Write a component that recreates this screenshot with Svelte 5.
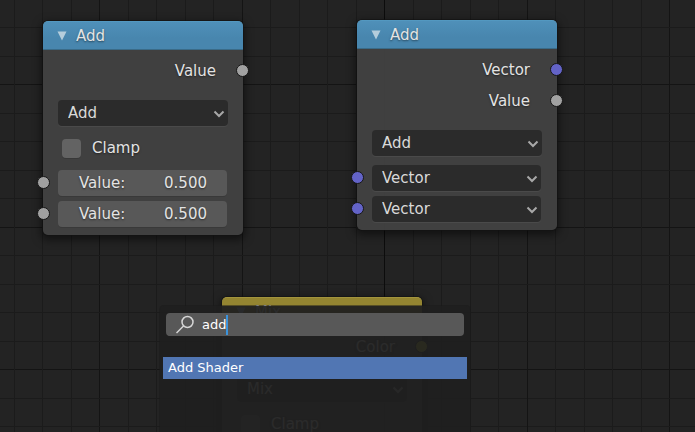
<script>
  const GRID = 285;
  // two major cells per pattern tile, five minor steps in each
  const steps = Array.from({ length: 10 }, (_, i) => ({
    at: Math.round((i * GRID) / 10),
    major: i % 5 === 0,
  }));

  let nodes = $state([
    {
      id: "math",
      title: "Add",
      kind: "vector",
      x: 43,
      y: 21,
      outputs: [{ name: "Value", type: "float" }],
      mode: "Add",
      clamp: false,
      inputs: [
        { name: "Value", type: "float", value: "0.500" },
        { name: "Value", type: "float", value: "0.500" },
      ],
    },
    {
      id: "vecmath",
      title: "Add",
      kind: "vector",
      x: 357,
      y: 20,
      outputs: [
        { name: "Vector", type: "vec" },
        { name: "Value", type: "float" },
      ],
      mode: "Add",
      inputs: [
        { name: "Vector", type: "vec" },
        { name: "Vector", type: "vec" },
      ],
    },
    {
      id: "mix",
      title: "Mix",
      kind: "color",
      x: 222,
      y: 297,
      outputs: [{ name: "Color", type: "color" }],
      mode: "Mix",
      clamp: false,
      inputs: [],
    },
  ]);

  let query = $state("add");
  const entries = ["Add Shader", "Mix Shader", "Emission"];
  let results = $derived(
    entries.filter((e) => e.toLowerCase().includes(query.toLowerCase()))
  );
</script>

{#snippet dropdown(label, value)}
  <span class="dropdown">
    <select aria-label={label}>
      <option>{value}</option>
    </select>
    <svg class="chevron" viewBox="0 0 12 8" aria-hidden="true">
      <path d="M1.5 1.5 L6 6 L10.5 1.5" />
    </svg>
  </span>
{/snippet}

<main>
  <svg class="grid" aria-hidden="true">
    <defs>
      <pattern id="cells" x="99" y="84" width={GRID} height={GRID} patternUnits="userSpaceOnUse">
        {#each steps as s}
          <rect class:major={s.major} x={s.at} y="0" width="1" height={GRID} />
          <rect class:major={s.major} x="0" y={s.at} width={GRID} height="1" />
        {/each}
      </pattern>
    </defs>
    <rect class="fill" width="100%" height="100%" />
    <rect class="axis" x="384" width="1" height="100%" />
  </svg>

  {#each nodes as node (node.id)}
    <section class="node" style="left: {node.x}px; top: {node.y}px">
      <header class={node.kind}>
        <button aria-label="Collapse {node.title}">
          <svg viewBox="0 0 10 10"><path d="M0.5 0.5 H9.5 L5 9.5 Z" /></svg>
        </button>
        <h2>{node.title}</h2>
      </header>

      <ul class="outputs">
        {#each node.outputs as out}
          <li>{out.name}<i class="socket right {out.type}"></i></li>
        {/each}
      </ul>

      <div class="props">
        {@render dropdown("Operation", node.mode)}
        {#if node.clamp !== undefined}
          <label class="clamp">
            <input type="checkbox" bind:checked={node.clamp} />
            Clamp
          </label>
        {/if}
      </div>

      <ul class="inputs">
        {#each node.inputs as input, i}
          <li>
            <i class="socket left {input.type}"></i>
            {#if input.type === "float"}
              <div class="number">
                <label for="{node.id}-{i}">{input.name}:</label>
                <input id="{node.id}-{i}" bind:value={input.value} />
              </div>
            {:else}
              {@render dropdown(input.name, input.name)}
            {/if}
          </li>
        {/each}
      </ul>
    </section>
  {/each}

  <div class="search">
    <label class="field">
      <svg viewBox="0 0 20 20" aria-hidden="true">
        <circle cx="12.5" cy="7" r="5.5" />
        <path d="M8.5 11 L1.5 18" />
      </svg>
      <span class="typed">
        <input aria-label="Search nodes" bind:value={query} />
        <span class="ghost" aria-hidden="true">{query}</span>
      </span>
    </label>
    <ul class="results">
      {#each results as r, i}
        <li><button class:active={i === 0}>{r}</button></li>
      {/each}
    </ul>
  </div>
</main>

<style>
  :global(body) {
    margin: 0;
    background: #232323;
  }

  main {
    position: relative;
    height: 100vh;
    overflow: hidden;
    background: #232323;
    color: #e3e3e3;
    font: 15px/20px "DejaVu Sans", sans-serif;
  }

  ul {
    list-style: none;
    margin: 0;
    padding: 0;
  }

  input,
  select,
  button {
    font: inherit;
    color: inherit;
    border: 0;
    margin: 0;
    padding: 0;
    outline: 0;
    background: none;
    appearance: none;
  }

  .grid {
    display: block;
    width: 100%;
    height: 100%;
  }

  .grid rect {
    fill: #1b1b1b;
  }

  .grid .major {
    fill: #141414;
  }

  .grid .fill {
    fill: url(#cells);
  }

  .grid .axis {
    fill: #0c0c0c;
  }

  .node {
    position: absolute;
    box-sizing: border-box;
    width: 200px;
    padding-bottom: 8px;
    border-radius: 5px;
    background: rgba(66, 66, 66, 0.95);
    box-shadow:
      0 0 0 1px rgba(18, 18, 18, 0.6),
      0 3px 9px 2px rgba(0, 0, 0, 0.5);
    text-shadow: 0 1px 2px rgba(0, 0, 0, 0.5);
  }

  header {
    display: flex;
    align-items: center;
    gap: 9px;
    box-sizing: border-box;
    height: 29px;
    padding-left: 14px;
    border-radius: 5px 5px 0 0;
    border-bottom: 1px solid #3a6b88;
  }

  header.vector {
    background: linear-gradient(#4f90b9, #4886ae 60%);
    border-top: 1px solid #5398c0;
  }

  header.color {
    background: #948531;
    border-top: 1px solid #a3943c;
    border-bottom-color: #6b6126;
  }

  header button {
    display: flex;
  }

  header button svg {
    width: 10px;
    height: 10px;
    fill: #b4cddc;
  }

  h2 {
    margin: 0;
    font: inherit;
  }

  .outputs {
    padding: 11px 0 19px;
    display: grid;
    gap: 11px;
  }

  .outputs li {
    position: relative;
    padding-right: 27px;
    text-align: right;
  }

  .socket {
    position: absolute;
    width: 11px;
    height: 11px;
    border: 1px solid #161616;
    border-radius: 50%;
    background: #a1a1a1;
  }

  .socket.right {
    right: -6px;
    top: 3px;
  }

  .socket.left {
    left: -6px;
    top: 6px;
  }

  .socket.vec {
    background: #6363c7;
  }

  .socket.color {
    background: #c7c729;
  }

  .props {
    padding: 0 15px;
  }

  .dropdown {
    display: block;
    position: relative;
  }

  select {
    display: block;
    width: 100%;
    height: 26px;
    padding-left: 10px;
    border-radius: 4px;
    background: #2b2b2b;
    box-shadow: 0 1px 0 #4a4a4a;
    color: #d9d9d9;
  }

  .chevron {
    position: absolute;
    top: 10px;
    right: 3px;
    width: 12px;
    height: 8px;
    fill: none;
    stroke: #a8a8a8;
    stroke-width: 2;
    pointer-events: none;
  }

  .clamp {
    display: flex;
    align-items: center;
    gap: 11px;
    padding: 12px 0 3px 4px;
  }

  .clamp input {
    width: 19px;
    height: 19px;
    border-radius: 4px;
    background: #636363;
    box-shadow: 0 1px 0 #383838;
  }

  .inputs {
    display: grid;
    gap: 5px;
    padding-top: 9px;
  }

  .inputs li {
    position: relative;
    padding: 0 16px 0 15px;
  }

  .number {
    display: flex;
    align-items: center;
    justify-content: space-between;
    height: 26px;
    padding: 0 20px 0 21px;
    border-radius: 4px;
    background: #585858;
    box-shadow: 0 1px 0 #393939;
  }

  .number input {
    width: 60px;
    text-align: right;
    text-shadow: inherit;
  }

  .search {
    position: absolute;
    left: 160px;
    top: 306px;
    bottom: -6px;
    box-sizing: border-box;
    width: 310px;
    padding: 7px 3px;
    border-radius: 4px;
    background: rgba(31, 31, 31, 0.94);
    box-shadow: 0 0 0 1px rgba(26, 26, 26, 0.5);
    color: #fff;
    font-size: 13px;
  }

  .field {
    display: flex;
    align-items: center;
    gap: 7px;
    height: 23px;
    margin: 0 3px;
    padding-left: 9px;
    border-radius: 4px;
    background: #585858;
  }

  .field svg {
    width: 20px;
    height: 20px;
    fill: none;
    stroke: #d6d6d6;
    stroke-width: 1.5;
  }

  /* the hidden copy sizes the box so the caret bar sits after the text */
  .typed {
    display: grid;
    border-right: 2px solid #3a93dc;
  }

  .typed > * {
    grid-area: 1 / 1;
  }

  .typed input {
    width: 0;
    min-width: 100%;
  }

  .ghost {
    visibility: hidden;
    white-space: pre;
  }

  .results {
    padding-top: 21px;
  }

  .results button {
    display: block;
    width: 100%;
    height: 22px;
    padding: 0 5px;
    text-align: left;
  }

  .results .active {
    background: #5176b3;
  }
</style>
